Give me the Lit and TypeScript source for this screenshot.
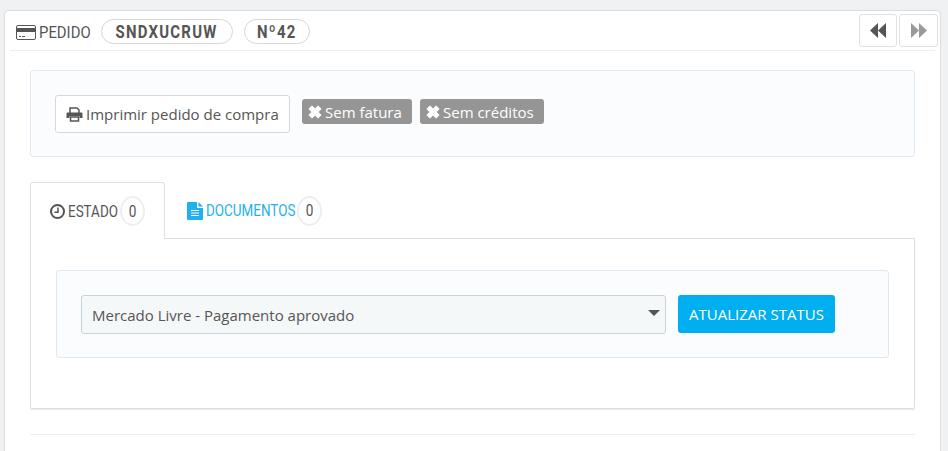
import { LitElement, html, css } from "lit";
import { customElement } from "lit/decorators.js";

const times = html`<svg class="x" viewBox="0 0 12 12" width="14" height="14"><path d="M1.100 3.400 3.400 1.100 6 3.700 8.600 1.100 10.900 3.400 8.300 6 10.900 8.600 8.600 10.900 6 8.300 3.400 10.900 1.100 8.600 3.700 6Z" fill="#fff" stroke="#fff" stroke-width="1" stroke-linejoin="round"/></svg>`;

@customElement("app-root")
export class AppRoot extends LitElement {
  static styles = css`
    :host { display: block; height: 451px; overflow: hidden; background: #eff1f2; font-family: "Open Sans", sans-serif; color: #555; box-sizing: border-box; padding: 10px 7px 0 4px; }
    * { box-sizing: border-box; }
    .panel { background: #fff; border: 1px solid #dcdfe2; border-bottom: none; border-radius: 5px 5px 0 0; height: 441px; padding: 2px 5px 0 5px; box-shadow: 0 0 1px #e3e5e7; }
    .head { height: 38px; border-bottom: 1px solid #eeeeee; display: flex; align-items: center; padding: 0 0 0 6px; font-family: Roboto, sans-serif; }
    .head .card { margin-right: 3px; margin-top: 1px; flex: none; }
    .cond { display: inline-block; white-space: nowrap; transform-origin: left center; flex: none; }
    .title { font-size: 16px; color: #555; width: 51px; margin-right: 11px; margin-top: 1px; transform: scaleX(.93); }
    .pill { height: 25px; border: 1px solid #d5d7d9; border-radius: 13px; display: flex; align-items: center; justify-content: center; font-weight: 700; font-size: 18px; letter-spacing: 1.5px; color: #555; margin-right: 11px; flex: none; }
    .pill span { display: block; white-space: nowrap; transform: scaleX(.83); }
    .pill.code { width: 132px; }
    .pill.num { width: 66px; }
    .nav { margin-left: auto; display: flex; gap: 2px; align-self: flex-start; margin-top: 1px; margin-right: -3px; }
    .nav button { width: 38px; height: 33px; border: 1px solid #dfe1e3; border-radius: 3px; background: #fff; padding: 0; display: flex; align-items: center; justify-content: center; }
    .nav button + button { width: 39px; }
    .content { padding: 19px 20px 0; }
    .well { background: #fbfcfe; border: 1px solid #dfe9f4; border-radius: 3px; }
    .top { height: 87px; padding: 24px; display: flex; align-items: flex-start; }
    .print { height: 38px; width: 235px; background: #fff; border: 1px solid #d6d9db; border-radius: 3px; display: flex; align-items: center; padding: 0 0 0 10px; gap: 3px; font: 15px "Open Sans", sans-serif; color: #555; white-space: nowrap; }
    .badge { height: 25px; margin-top: 4px; background: #959595; border-radius: 3px; color: #fff; font-size: 15px; display: flex; align-items: center; gap: 3px; padding: 0 0 0 6px; white-space: nowrap; }
    .badge.a { margin-left: 12px; width: 110px; }
    .badge.b { margin-left: 8px; width: 124px; }
    .tabs { display: flex; margin-top: 25px; height: 57px; }
    .tab { height: 57px; display: flex; align-items: center; font-family: Roboto, sans-serif; font-size: 16px; padding: 0 0 0 19px; }
    .tab svg { flex: none; margin-right: 3px; }
    .tab.on { width: 135px; background: #fff; border: 1px solid #dfe1e3; border-bottom: none; border-radius: 3px 3px 0 0; color: #555; position: relative; z-index: 1; }
    .tab.off { width: 175px; padding-left: 22px; color: #1fb0ee; }
    .lab-a { width: 49px; transform: scaleX(.84); margin-right: 3px; }
    .lab-b { width: 88px; transform: scaleX(.84); margin-right: 3px; }
    .count { width: 25px; height: 30px; border-radius: 50%; border: 2px solid #eeeeee; display: flex; align-items: center; justify-content: center; color: #555; font-size: 16px; flex: none; }
    .count span { display: block; transform: scaleX(.85); }
    .pane { margin-top: -1px; height: 171px; border: 1px solid #dcdfe1; border-radius: 0 0 2px 2px; box-shadow: 0 1px 1px #e6e6e6; padding: 31px 25px 0; }
    .status { height: 88px; padding: 24px; display: flex; align-items: flex-start; }
    .select { width: 585px; height: 39px; background: #f5f8f9; border: 1px solid #c8d3d8; border-radius: 3px; display: flex; align-items: center; justify-content: space-between; padding: 0 10px; font-size: 15px; color: #555; }
    .caret { width: 0; height: 0; border-left: 6px solid transparent; border-right: 6px solid transparent; border-top: 6px solid #555; margin: -4px -5px 0 0; }
    .go { margin-left: 12px; width: 157px; height: 38px; background: #00aff0; border: none; border-radius: 3px; color: #fff; font: 15px "Open Sans", sans-serif; padding: 0; white-space: nowrap; }
    hr { margin: 25px 0 0; border: none; border-top: 1px solid #eeeeee; height: 0; }
  `;
  render() {
    return html`<div class="panel">
      <div class="head">
        <svg class="card" width="20" height="15" viewBox="0 0 20 15"><rect x=".5" y=".5" width="19" height="14" rx="1.500" fill="none" stroke="#555"/><rect x="1" y="3" width="18" height="4" fill="#555"/><path d="M3 11.500h2M6 11.500h3" stroke="#555"/></svg>
        <span class="cond title">PEDIDO</span>
        <span class="pill code"><span>SNDXUCRUW</span></span>
        <span class="pill num"><span>Nº42</span></span>
        <div class="nav">
          <button><svg width="16" height="15" viewBox="0 0 16 15"><path d="M8 0v15L0 7.500ZM16 0v15L8 7.500Z" fill="#555"/></svg></button>
          <button><svg width="16" height="15" viewBox="0 0 16 15"><path d="M0 0v15l8-7.500ZM8 0v15l8-7.500Z" fill="#999"/></svg></button>
        </div>
      </div>
      <div class="content">
        <div class="well top">
          <button class="print">
            <svg width="17" height="15" viewBox="0 0 17 15"><path d="M4 6V1h7l2 2v3" fill="none" stroke="#555" stroke-width="1.500"/><path d="M1.500 5.500h14a1 1 0 0 1 1 1V11h-3V9h-10v2h-3V6.500a1 1 0 0 1 1-1Z" fill="#555"/><path d="M4.500 10h8v4h-8Z" fill="#fff" stroke="#555" stroke-width="1.500"/></svg>
            Imprimir pedido de compra
          </button>
          <span class="badge a">${times}Sem fatura</span>
          <span class="badge b">${times}Sem créditos</span>
        </div>
        <div class="tabs">
          <div class="tab on">
            <svg width="15" height="15" viewBox="0 0 15 15"><circle cx="7.500" cy="7.500" r="6.500" fill="none" stroke="#555" stroke-width="2"/><path d="M8 3.500V8.200H4.500" fill="none" stroke="#555" stroke-width="1.500"/></svg>
            <span class="cond lab-a">ESTADO</span><span class="count"><span>0</span></span>
          </div>
          <div class="tab off">
            <svg width="16" height="18" viewBox="0 0 16 18"><path d="M0 1a1 1 0 0 1 1-1h9v6h6v11a1 1 0 0 1-1 1H1a1 1 0 0 1-1-1Z" fill="#1fb0ee"/><path d="M11.500 0 16 4.500h-4.500Z" fill="#1fb0ee"/><path d="M4 8.500h8M4 11h8M4 13.500h8" stroke="#fff"/></svg>
            <span class="cond lab-b">DOCUMENTOS</span><span class="count"><span>0</span></span>
          </div>
        </div>
        <div class="pane">
          <div class="well status">
            <div class="select"><span>Mercado Livre - Pagamento aprovado</span><span class="caret"></span></div>
            <button class="go">ATUALIZAR STATUS</button>
          </div>
        </div>
        <hr />
      </div>
    </div>`;
  }
}
